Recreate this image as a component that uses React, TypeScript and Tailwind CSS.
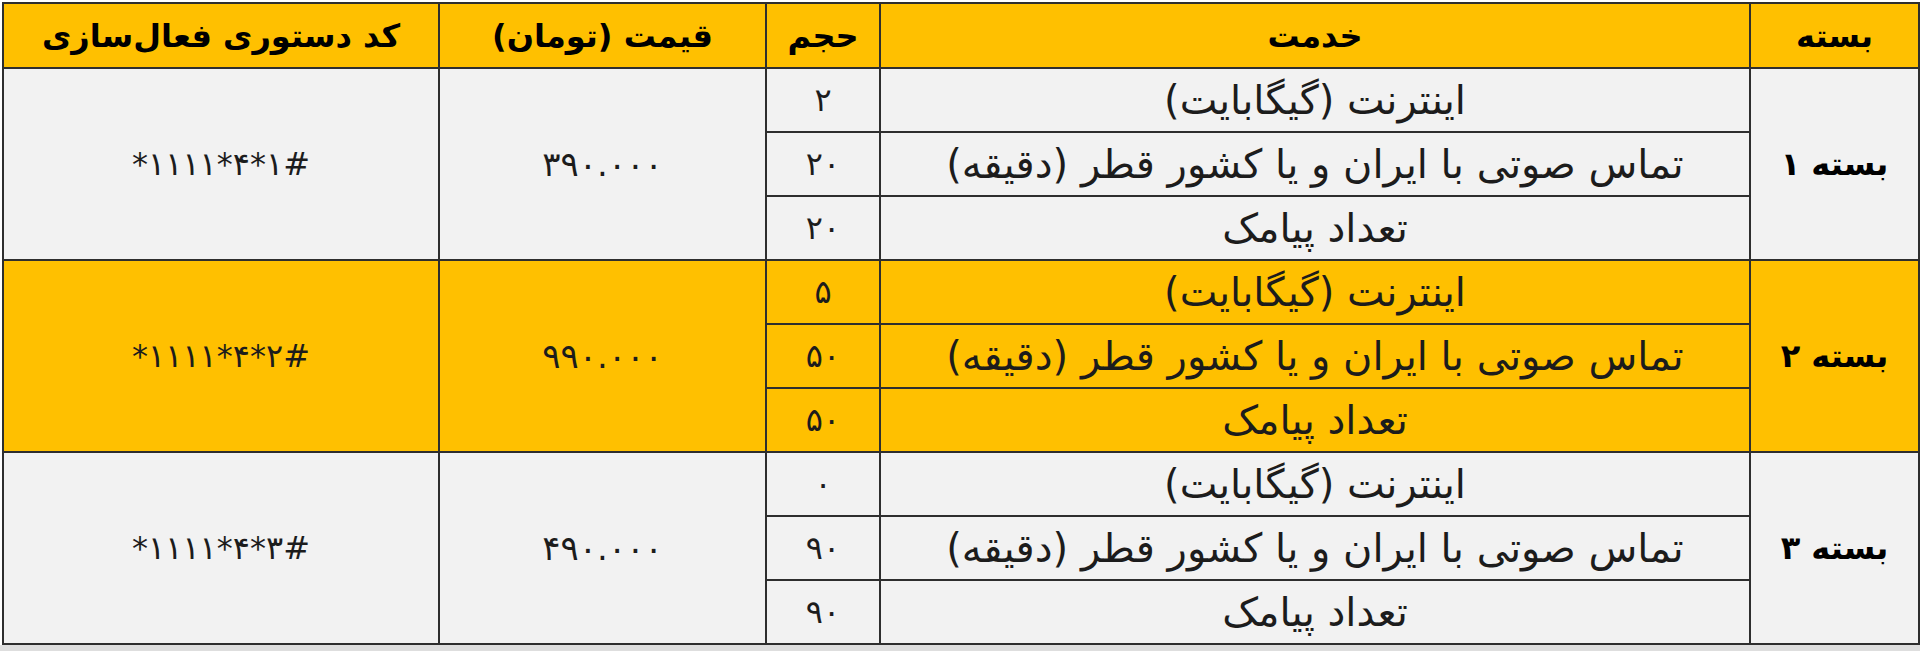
import React from "react";

type Item = { service: string; volume: string };
type Pack = { name: string; price: string; code: string; items: Item[]; highlight: boolean };

const services = ["اینترنت (گیگابایت)", "تماس صوتی با ایران و یا کشور قطر (دقیقه)", "تعداد پیامک"];

const packs: Pack[] = [
  { name: "بسته ۱", price: "۳۹۰.۰۰۰", code: "*۱۱۱۱*۴*۱#", highlight: false, items: [
    { service: services[0], volume: "۲" },
    { service: services[1], volume: "۲۰" },
    { service: services[2], volume: "۲۰" },
  ] },
  { name: "بسته ۲", price: "۹۹۰.۰۰۰", code: "*۱۱۱۱*۴*۲#", highlight: true, items: [
    { service: services[0], volume: "۵" },
    { service: services[1], volume: "۵۰" },
    { service: services[2], volume: "۵۰" },
  ] },
  { name: "بسته ۳", price: "۴۹۰.۰۰۰", code: "*۱۱۱۱*۴*۳#", highlight: false, items: [
    { service: services[0], volume: "۰" },
    { service: services[1], volume: "۹۰" },
    { service: services[2], volume: "۹۰" },
  ] },
];

const cell = "border-2 border-[#2e2e2e] text-center align-middle p-0 leading-none";

export default function App() {
  return (
    <div className="w-[1920px] h-[651px] bg-[#dedede] overflow-hidden font-['DejaVu_Sans',sans-serif]">
      <div className="bg-white pt-[2px] pl-[2px]">
        <table dir="rtl" className="w-[1916px] border-collapse table-fixed text-[#1c1c1c]">
          <colgroup>
            <col className="w-[169px]" />
            <col className="w-[870px]" />
            <col className="w-[114px]" />
            <col className="w-[327px]" />
            <col className="w-[436px]" />
          </colgroup>
          <thead>
            <tr className="h-[65px] bg-[#ffc000] text-[32px] font-bold text-black">
              <th className={cell}>بسته</th>
              <th className={cell}>خدمت</th>
              <th className={cell}>حجم</th>
              <th className={cell}>قیمت (تومان)</th>
              <th className={cell}>کد دستوری فعال‌سازی</th>
            </tr>
          </thead>
          <tbody>
            {packs.map((p) =>
              p.items.map((it, i) => (
                <tr key={p.name + i} className={`h-[64px] ${p.highlight ? "bg-[#ffc000]" : "bg-[#f2f2f2]"}`}>
                  {i === 0 && (
                    <td rowSpan={3} className={`${cell} text-[32px] font-bold text-black`}>{p.name}</td>
                  )}
                  <td className={`${cell} text-[40px]`}>{it.service}</td>
                  <td className={`${cell} text-[32px]`}>{it.volume}</td>
                  {i === 0 && (
                    <td rowSpan={3} className={`${cell} text-[34px]`}>
                      <span dir="ltr" className="[unicode-bidi:bidi-override] tracking-[6px]">{p.price}</span>
                    </td>
                  )}
                  {i === 0 && (
                    <td rowSpan={3} className={`${cell} text-[32px]`}>
                      <span dir="ltr" className="[unicode-bidi:bidi-override] tracking-[1px]">{p.code}</span>
                    </td>
                  )}
                </tr>
              ))
            )}
          </tbody>
        </table>
      </div>
    </div>
  );
}
